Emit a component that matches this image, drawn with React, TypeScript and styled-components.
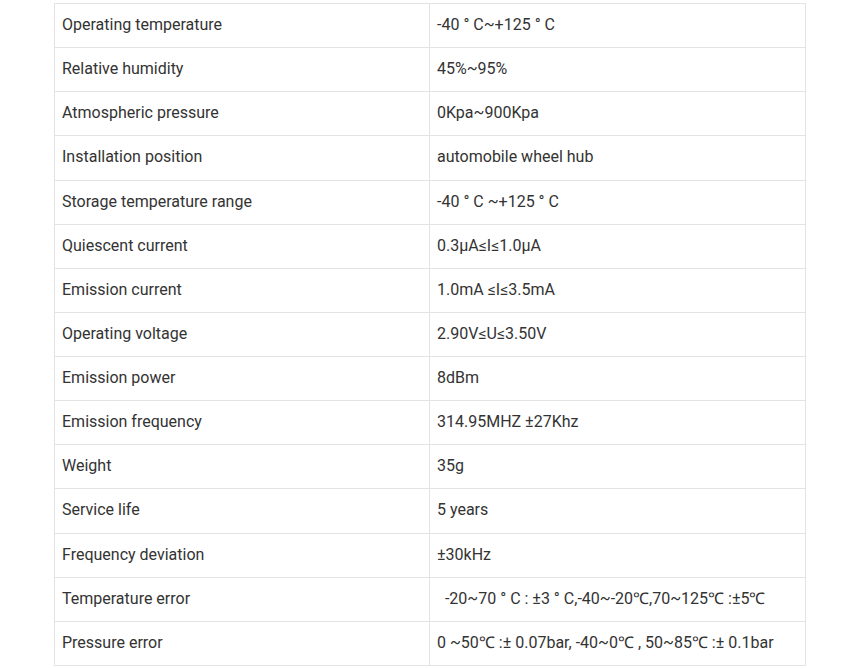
import React from "react";
import styled, { createGlobalStyle } from "styled-components";

const Global = createGlobalStyle`
  html, body { margin: 0; padding: 0; background: #fff; }
  body { font-family: Roboto, "Liberation Sans", Arial, sans-serif; }
`;

const Page = styled.div`
  padding: 3px 0 0 54px;
`;

const Table = styled.table`
  width: 752px;
  border-collapse: collapse;
  table-layout: fixed;
  color: #333;
  font-size: 16px;
`;

const Row = styled.tr`
  height: 44.13px;
`;

const Cell = styled.td`
  border: 1px solid #e3e3e3;
  padding: 0 0 1px 7px;
  vertical-align: middle;
  line-height: 20px;
  white-space: pre;
`;

const data: [string, string][] = [
  ["Operating temperature", "-40 ° C~+125 ° C"],
  ["Relative humidity", "45%~95%"],
  ["Atmospheric pressure", "0Kpa~900Kpa"],
  ["Installation position", "automobile wheel hub"],
  ["Storage temperature range", "-40 ° C ~+125 ° C"],
  ["Quiescent current", "0.3μA≤I≤1.0μA"],
  ["Emission current", "1.0mA ≤I≤3.5mA"],
  ["Operating voltage", "2.90V≤U≤3.50V"],
  ["Emission power", "8dBm"],
  ["Emission frequency", "314.95MHZ ±27Khz"],
  ["Weight", "35g"],
  ["Service life", "5 years"],
  ["Frequency deviation", "±30kHz"],
  ["Temperature error", "  -20~70 ° C : ±3 ° C,-40~-20℃,70~125℃ :±5℃"],
  ["Pressure error", "0 ~50℃ :± 0.07bar, -40~0℃ , 50~85℃ :± 0.1bar"],
];

export default function App() {
  return (
    <Page>
      <Global />
      <Table>
        <colgroup>
          <col style={{ width: 375 }} />
          <col />
        </colgroup>
        <tbody>
          {data.map(([k, v]) => (
            <Row key={k}>
              <Cell>{k}</Cell>
              <Cell>{v}</Cell>
            </Row>
          ))}
        </tbody>
      </Table>
    </Page>
  );
}
